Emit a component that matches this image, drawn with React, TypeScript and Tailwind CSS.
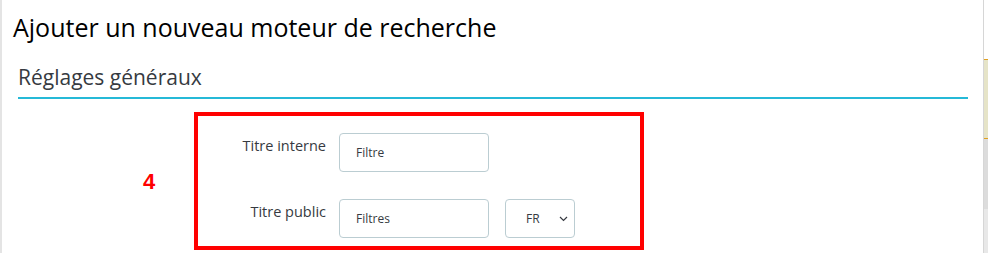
export default function App() {
  return (
    <div className="flex h-[253px] w-[988px] overflow-hidden bg-white font-['Open_Sans',sans-serif] text-[#363a41]">
      {/* bordure gauche */}
      <div className="w-[2px] shrink-0 bg-[#e4e4e4]" />

      {/* contenu principal */}
      <div className="flex-1 pl-[11px] pt-[9px]">
        <h1 className="text-[25px] leading-[36px] text-[#000]">Ajouter un nouveau moteur de recherche</h1>

        <div className="ml-[5px] mr-[15px] mt-[18px] border-b-2 border-[#25b9d7] pb-[6px]">
          <h2 className="text-[21px] leading-[28px] text-[#363a41]">Réglages généraux</h2>
        </div>

        <div className="ml-[130px] mt-[13px] flex items-center">
          <div className="w-[51px] text-left font-['Liberation_Sans',sans-serif] text-[22px] font-bold text-[#ff0000]">4</div>

          <div className="flex h-[138px] w-[450px] flex-col gap-[27px] border-4 border-[#ff0000] pt-[17px]">
            <Row label="Titre interne" value="Filtre" />
            <Row label="Titre public" value="Filtres" lang />
          </div>
        </div>
      </div>

      {/* barre latérale droite */}
      <div className="flex w-[5px] shrink-0 flex-col border-l border-[#d6d6d6]">
        <div className="h-[59px] bg-white" />
        <div className="h-[80px] border-y border-[#e0a020] bg-[#e6e4c8]" />
        <div className="h-[70px] bg-[#dcdcdc]" />
        <div className="flex-1 bg-[#e8e8e8]" />
      </div>
    </div>
  );
}

function Row({ label, value, lang }: { label: string; value: string; lang?: boolean }) {
  return (
    <div className="flex items-start">
      <div className="w-[128px] pt-[2px] text-right text-[14.5px] leading-[22px] text-[#363a41]">{label}</div>
      <div className="ml-[13px] flex h-[39px] w-[150px] items-center rounded-[4px] border border-[#bbcdd2] pl-[16px] text-[12px] text-[#363a41]">
        {value}
      </div>
      {lang && (
        <div className="ml-[16px] flex h-[39px] w-[70px] items-center justify-between rounded-[4px] border border-[#bbcdd2] pl-[20px] pr-[6px] text-[12px] text-[#363a41]">
          <span>FR</span>
          <svg width="9" height="6" viewBox="0 0 9 6" fill="none" stroke="#363a41" strokeWidth="1.2">
            <path d="M1 1l3.5 3.5L8 1" />
          </svg>
        </div>
      )}
    </div>
  );
}
